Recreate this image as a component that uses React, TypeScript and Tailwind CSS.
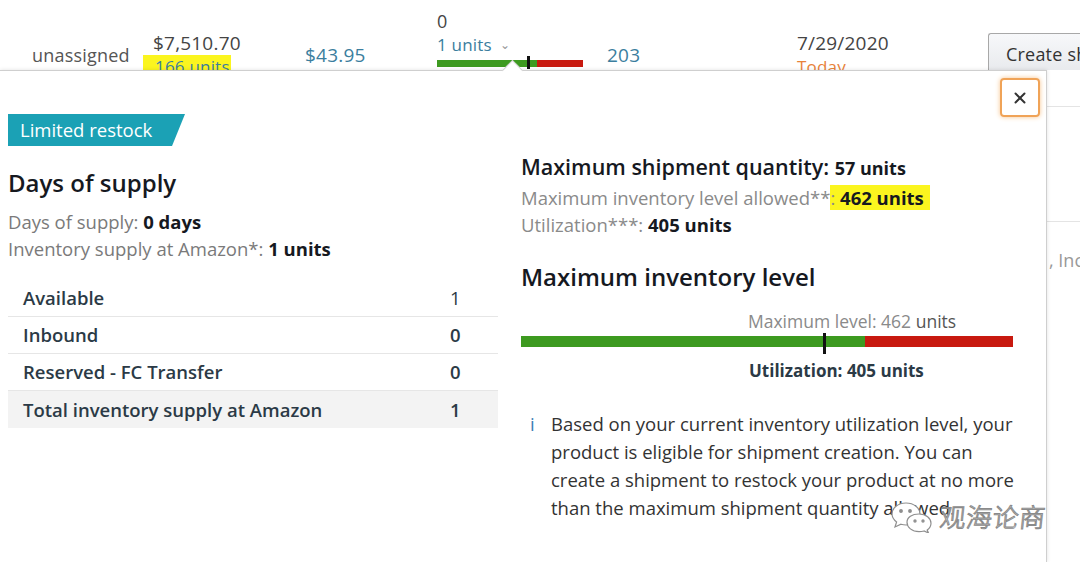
import { X } from "lucide-react"

const font = "font-['Open_Sans','Noto_Sans',sans-serif]"

type Row = { label: string, value: string, total?: boolean }

const supplyRows: Row[] = [
  { label: "Available", value: "1" },
  { label: "Inbound", value: "0" },
  { label: "Reserved - FC Transfer", value: "0" },
  { label: "Total inventory supply at Amazon", value: "1", total: true },
]

function TopRow() {
  return (
    <div className="h-[70px] overflow-hidden flex text-[19px] text-[#555] tracking-[0.2px]">
      <div className="w-[153px] shrink-0 pl-[32px] pt-[42px] leading-[26px] text-[18px]">unassigned</div>
      <div className="w-[152px] shrink-0 pt-[32px] leading-[23px]">
        <div className="text-[#444]">$7,510.70</div>
        <div className="text-[#3b7e9e] bg-[#fbf51f] -ml-[10px] pl-[12px] w-[88px] text-[17px]">166 units</div>
      </div>
      <div className="w-[132px] shrink-0 pt-[42px] leading-[26px] text-[#3b7e9e]">$43.95</div>
      <div className="w-[170px] shrink-0 pt-[9px] leading-[24px]">
        <div className="text-[#444] text-[18px]">0</div>
        <div className="text-[#3b7e9e] text-[17px] flex items-center gap-[8px]">1 units <span className="text-[#999] text-[12px]">⌄</span></div>
        <div className="mt-[3px] relative flex h-[7px] w-[146px]">
          <div className="w-[100px] bg-[#3d9a20]"></div>
          <div className="flex-1 bg-[#c8190f]"></div>
          <div className="absolute left-[90px] -top-[4px] w-[3px] h-[13px] bg-[#111]"></div>
        </div>
      </div>
      <div className="w-[190px] shrink-0 pt-[42px] leading-[26px] text-[#3b7e9e]">203</div>
      <div className="w-[191px] shrink-0 pt-[32px] leading-[23px]">
        <div className="text-[#444]">7/29/2020</div>
        <div className="text-[#e8823a] text-[17px]">Today</div>
      </div>
      <div className="flex-1 min-w-0 pt-[33px]">
        <div className="h-[42px] border border-[#a8a8a8] rounded-l-[3px] border-r-0 bg-gradient-to-b from-[#f7f8fa] to-[#e7e9ec] pl-[17px] leading-[40px] text-[18px] text-[#333] whitespace-nowrap">Create shipment</div>
      </div>
    </div>
  )
}

function LeftColumn() {
  return (
    <div className="w-[490px] pt-[21px]">
      <h2 className="text-[24px] font-semibold text-[#16191f] leading-[32px]">Days of supply</h2>
      <div className="mt-[9px] text-[18.5px] leading-[27px] text-[#7a7a7a]">
        <div>Days of supply: <span className="font-bold text-[#16191f]">0 days</span></div>
        <div>Inventory supply at Amazon*: <span className="font-bold text-[#16191f]">1 units</span></div>
      </div>
      <div className="mt-[18px]">
        {supplyRows.map((r) => (
          <div
            key={r.label}
            className={`h-[37px] flex items-center px-[15px] text-[18.5px] font-semibold text-[#2b3a46] border-b border-[#e6e6e6] ${r.total ? "bg-[#f3f3f3] border-b-0" : ""}`}
          >
            <span className="w-[427px]">{r.label}</span>
            <span className={r.value == "1" && !r.total ? "font-normal" : ""}>{r.value}</span>
          </div>
        ))}
      </div>
    </div>
  )
}

function RightColumn() {
  return (
    <div className="w-[492px] pt-[7px]">
      <div className="text-[21.5px] leading-[28px] font-semibold text-[#16191f]">
        Maximum shipment quantity: <span className="text-[18px] font-bold">57 units</span>
      </div>
      <div className="mt-[2px] text-[18.5px] leading-[27px] text-[#8a8a8a]">
        <div>Maximum inventory level allowed**<span className="bg-[#fbf51f] font-bold text-[#16191f] pr-[6px]"><span className="font-normal text-[#8a8a8a]">:</span> 462 units</span></div>
        <div>Utilization***: <span className="font-bold text-[#16191f]">405 units</span></div>
      </div>
      <h2 className="mt-[23px] text-[24px] leading-[32px] font-semibold text-[#16191f]">Maximum inventory level</h2>
      <div className="mt-[17px] pl-[227px] text-[17.5px] leading-[22px] text-[#8a8a8a]">
        Maximum level: 462 <span className="text-[#555]">units</span>
      </div>
      <div className="mt-[4px] relative flex h-[11px]">
        <div className="w-[344px] bg-[#3d9a20]"></div>
        <div className="flex-1 bg-[#c8190f]"></div>
        <div className="absolute left-[302px] -top-[3px] w-[3px] h-[21px] bg-[#111]"></div>
      </div>
      <div className="mt-[13px] pl-[228px] text-[17px] leading-[22px] font-bold text-[#2b3a46]">Utilization: 405 units</div>
      <div className="mt-[28px] flex text-[18.5px] leading-[28px] text-[#333]">
        <span className="w-[30px] shrink-0 pl-[9px] text-[#3b7eb5]">i</span>
        <p className="w-[464px] shrink-0">
          Based on your current inventory utilization level, your product is eligible for shipment creation. You can create a shipment to restock your product at no more than the maximum shipment quantity allowed.
        </p>
      </div>
    </div>
  )
}

function Watermark() {
  return (
    <div className="absolute left-[890px] top-[428px] flex items-center gap-[6px] pointer-events-none whitespace-nowrap">
      <svg width="44" height="34" viewBox="0 0 44 34" fill="white" stroke="#8f8f8f" strokeWidth="1.2">
        <path d="M16 4c8 0 14 5 14 11s-6 11-14 11c-1.8 0-3.4-.3-5-.8L5 28l1.6-5C4 21 2 18.2 2 15 2 9 8 4 16 4z" />
        <circle cx="11" cy="12" r="1.3" fill="#8f8f8f" />
        <circle cx="20" cy="12" r="1.3" fill="#8f8f8f" />
        <path d="M29 15c7 0 12 4.2 12 9.3 0 2.7-1.5 5.1-3.8 6.8L38.5 34l-4.5-2c-1.5.4-3.1.6-5 .6-7 0-12-4.2-12-9.3S22 15 29 15z" />
        <circle cx="25" cy="22" r="1.1" fill="#8f8f8f" />
        <circle cx="33" cy="22" r="1.1" fill="#8f8f8f" />
      </svg>
      <span className="font-['Noto_Sans_CJK_SC',sans-serif] font-light text-[26px] leading-[30px] text-white [-webkit-text-stroke:1px_#8a8a8a] tracking-[0.5px] -skew-x-6">观海论商</span>
    </div>
  )
}

export default function App() {
  return (
    <div className={`w-[1080px] h-[562px] overflow-hidden bg-white ${font}`}>
      <TopRow />
      <div className="flex">
        <div className="relative w-[1047px] shrink-0 h-[492px] border-t border-r border-[#cfcfcf] bg-white shadow-[0_0_4px_rgba(0,0,0,0.12)]">
          <div className="absolute left-[505px] -top-[8px] w-[15px] h-[15px] rotate-45 bg-white border-l border-t border-[#cfcfcf]"></div>
          <button className="absolute left-[1000px] top-[7px] w-[40px] h-[39px] rounded-[4px] border-2 border-[#f0a357] shadow-[0_0_5px_#f6c48e] flex items-center justify-center text-[#333]">
            <X size={18} strokeWidth={2.6} />
          </button>
          <div className="pl-[8px] pt-[43px]">
            <div className="w-[177px] h-[32px] bg-[#1ba1b5] [clip-path:polygon(0_0,100%_0,calc(100%-13px)_100%,0_100%)] pl-[12px] leading-[32px] text-[18.5px] font-medium text-white">Limited restock</div>
            <div className="flex gap-[23px]">
              <LeftColumn />
              <RightColumn />
            </div>
          </div>
          <Watermark />
        </div>
        <div className="flex-1 min-w-0 h-[492px] bg-white overflow-hidden">
          <div className="h-[37px] border-b border-[#e4e4e4]"></div>
          <div className="h-[115px] border-b border-[#e4e4e4]"></div>
          <div className="pt-[25px] text-[18px] text-[#999] whitespace-nowrap pl-[2px]">, Inc</div>
        </div>
      </div>
    </div>
  )
}
